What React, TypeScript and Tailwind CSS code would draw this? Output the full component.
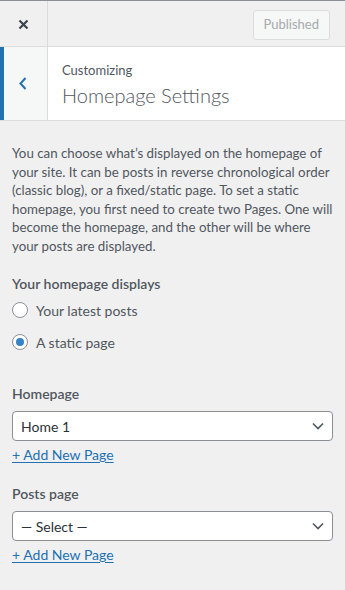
import { useState } from "react";

const FONT = { fontFamily: 'Lato, "Open Sans", Arial, sans-serif' };

function Radio({ checked, label, onClick }: { checked: boolean; label: string; onClick: () => void }) {
  return (
    <label className="flex h-[20px] cursor-pointer items-center gap-[8px]" onClick={onClick}>
      <span className="flex h-[16px] w-[16px] shrink-0 items-center justify-center rounded-full border border-[#8c8f94] bg-white">
        {checked && <span className="h-[8px] w-[8px] rounded-full bg-[#3582c4]" />}
      </span>
      <span className="text-[14px] text-[#50575e]">{label}</span>
    </label>
  );
}

function PageSelect({ title, value }: { title: string; value: string }) {
  return (
    <div>
      <div className="text-[14px] leading-[20px] font-semibold text-[#50575e]">{title}</div>
      <div className="mt-[7px] flex h-[30px] items-center justify-between rounded-[4px] border border-[#8c8f94] bg-white pr-[8px] pl-[8px]">
        <span className="text-[14px] text-[#2c3338]">{value}</span>
        <svg width="12" height="8" viewBox="0 0 12 8" fill="none">
          <path d="M1 1.5 6 6.5 11 1.5" stroke="#50575e" strokeWidth="1.6" />
        </svg>
      </div>
      <a href="#" className="mt-[4px] inline-block text-[14px] leading-[20px] text-[#2271b1] underline underline-offset-2">
        + Add New Page
      </a>
    </div>
  );
}

export default function App() {
  const [mode, setMode] = useState<"posts" | "page">("page");

  return (
    <div className="min-h-[590px] w-[345px] border-t border-[#8c8f94] bg-[#f0f0f1]" style={FONT}>
      <div className="flex h-[46px] items-stretch border-b border-[#dcdcde]">
        <button type="button" className="flex w-[48px] items-center justify-center border-r border-[#dcdcde] pt-[2px]">
          <svg width="11" height="11" viewBox="0 0 11 11">
            <path d="M1.5 1.5 9.5 9.5M9.5 1.5 1.5 9.5" stroke="#3c434a" strokeWidth="2.2" />
          </svg>
        </button>
        <div className="flex flex-1 items-center justify-end pt-[3px] pr-[15px]">
          <button
            type="button"
            disabled
            className="h-[30px] rounded-[3px] border border-[#dcdcde] bg-[#f6f7f7] px-[10px] text-[13px] text-[#a7aaad]"
          >
            Published
          </button>
        </div>
      </div>

      <div className="flex h-[74px] border-b border-[#dcdcde] bg-white">
        <button
          type="button"
          className="flex w-[48px] items-center border-r border-l-4 border-r-[#dcdcde] border-l-[#2271b1] bg-[#f6f7f7] pl-[15px]"
        >
          <svg width="8" height="13" viewBox="0 0 8 13" fill="none">
            <path d="M6.5 1 1.5 6.5 6.5 12" stroke="#2271b1" strokeWidth="2" />
          </svg>
        </button>
        <div className="flex flex-col justify-center pt-[2px] pl-[14px]">
          <span className="text-[13px] leading-[18px] text-[#50575e]">Customizing</span>
          <span className="mt-[3px] text-[20px] leading-[26px] font-light text-[#50575e]">Homepage Settings</span>
        </div>
      </div>

      <div className="px-[12px] pt-[23px] pb-[20px]">
        <p className="text-[13.3px] leading-[18.5px] text-[#50575e]">
          You can choose what’s displayed on the homepage of your site. It can be posts in reverse chronological order (classic blog), or a fixed/static page. To set a static homepage, you first need to create two Pages. One will become the homepage, and the other will be where your posts are displayed.
        </p>

        <div className="mt-[19px] text-[14px] leading-[20px] font-semibold text-[#50575e]">Your homepage displays</div>
        <div className="mt-[6px] flex flex-col gap-[12px]">
          <Radio checked={mode === "posts"} label="Your latest posts" onClick={() => setMode("posts")} />
          <Radio checked={mode === "page"} label="A static page" onClick={() => setMode("page")} />
        </div>

        <div className="mt-[32px] flex flex-col gap-[18px]">
          <PageSelect title="Homepage" value="Home 1" />
          <PageSelect title="Posts page" value="— Select —" />
        </div>
      </div>
    </div>
  );
}
